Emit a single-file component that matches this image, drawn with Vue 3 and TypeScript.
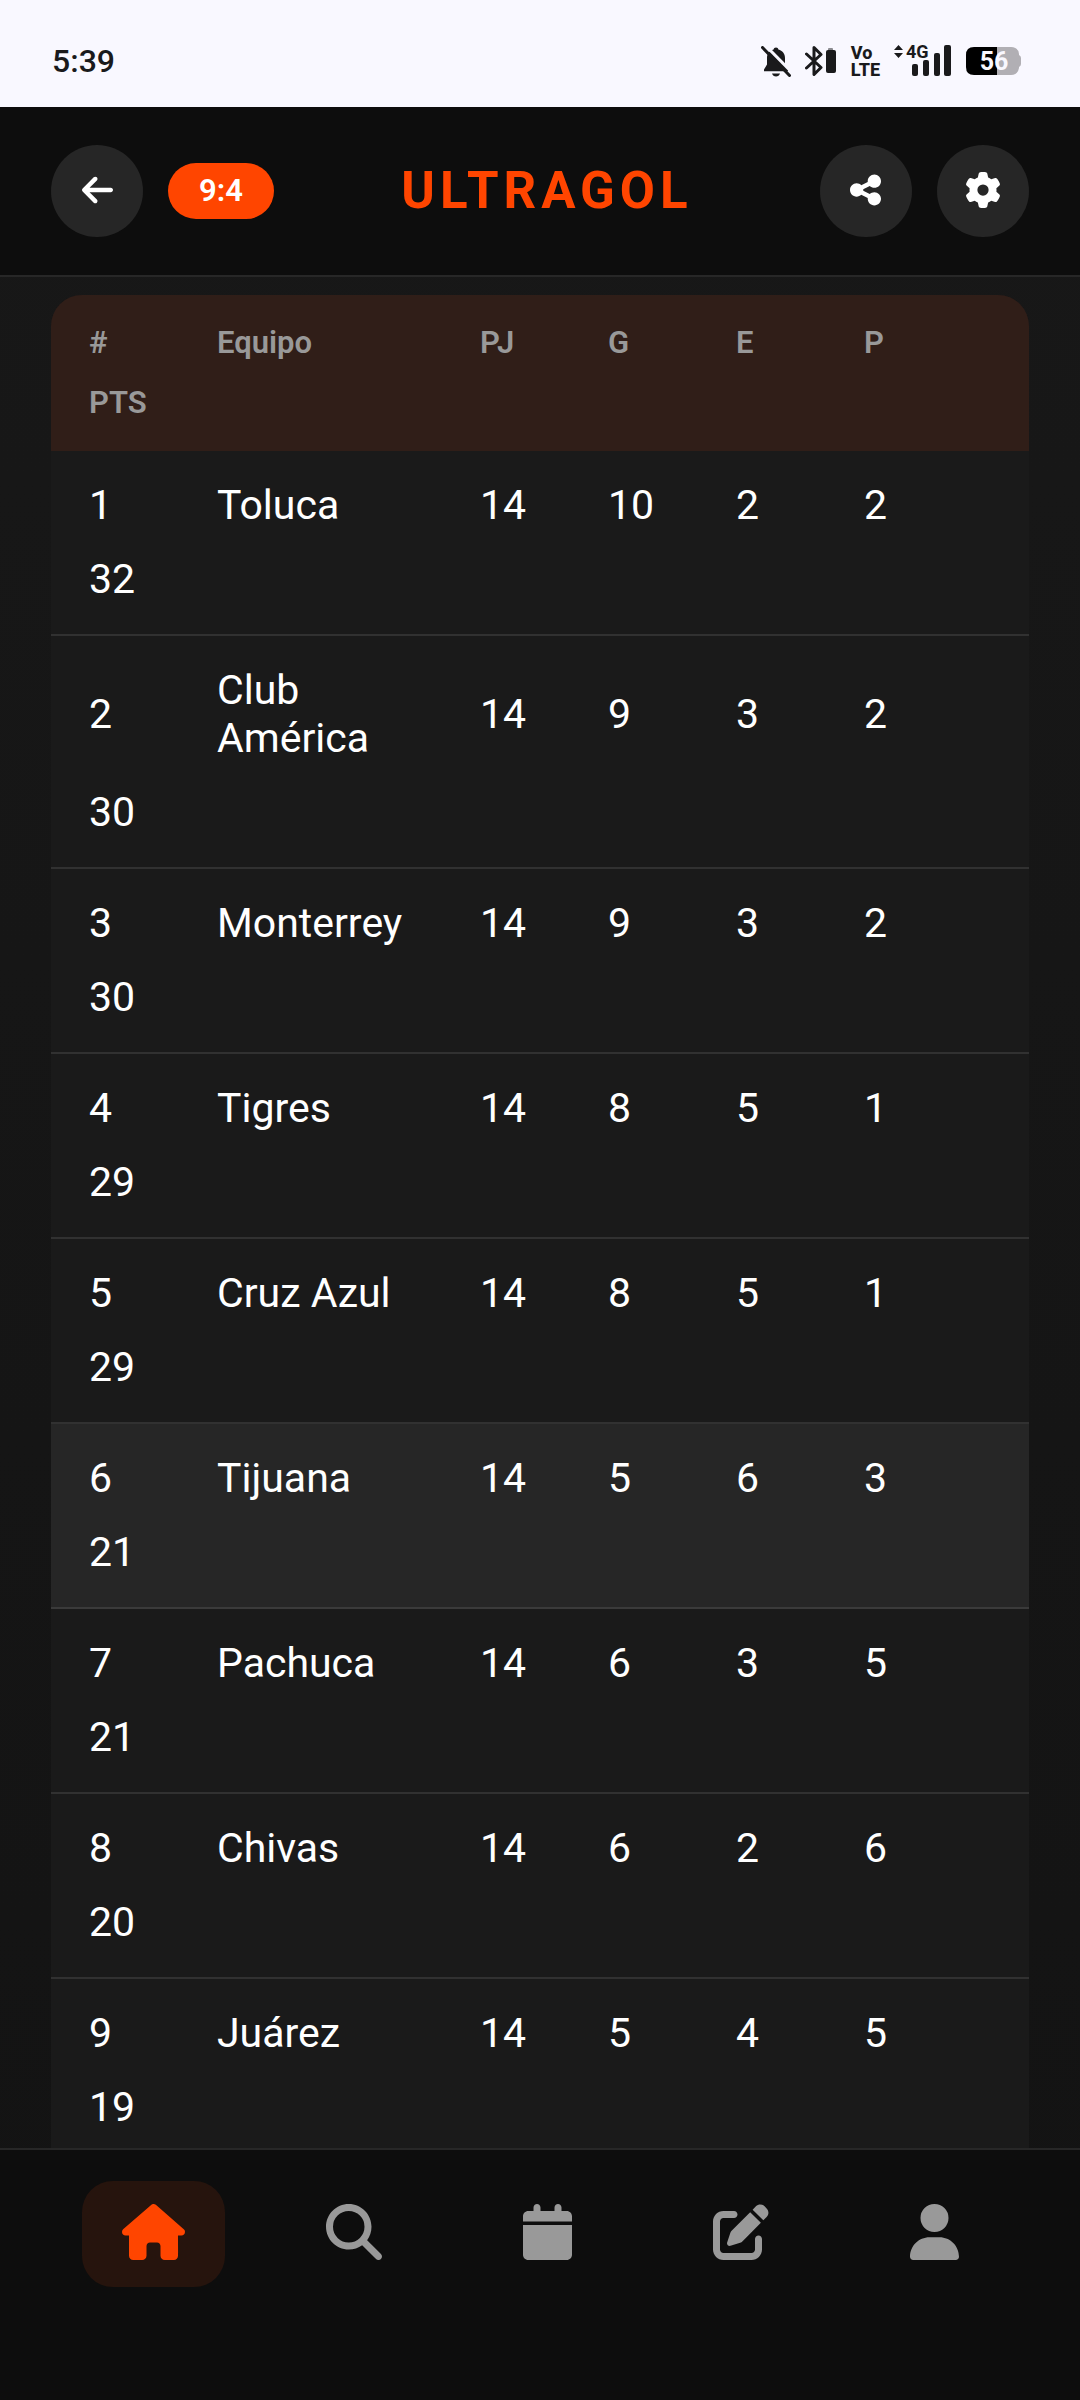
<script setup lang="ts">
import { ref } from 'vue'

interface TeamRow {
  pos: number
  team: string
  played: number
  won: number
  drawn: number
  lost: number
  points: number
}

interface NavItem {
  id: string
  label: string
  box: number
  path: string
}

const columns: string[] = ['#', 'Equipo', 'PJ', 'G', 'E', 'P', 'PTS']

const rows: TeamRow[] = [
  { pos: 1, team: 'Toluca', played: 14, won: 10, drawn: 2, lost: 2, points: 32 },
  { pos: 2, team: 'Club América', played: 14, won: 9, drawn: 3, lost: 2, points: 30 },
  { pos: 3, team: 'Monterrey', played: 14, won: 9, drawn: 3, lost: 2, points: 30 },
  { pos: 4, team: 'Tigres', played: 14, won: 8, drawn: 5, lost: 1, points: 29 },
  { pos: 5, team: 'Cruz Azul', played: 14, won: 8, drawn: 5, lost: 1, points: 29 },
  { pos: 6, team: 'Tijuana', played: 14, won: 5, drawn: 6, lost: 3, points: 21 },
  { pos: 7, team: 'Pachuca', played: 14, won: 6, drawn: 3, lost: 5, points: 21 },
  { pos: 8, team: 'Chivas', played: 14, won: 6, drawn: 2, lost: 6, points: 20 },
  { pos: 9, team: 'Juárez', played: 14, won: 5, drawn: 4, lost: 5, points: 19 },
]

const selected = ref<number>(6)
const activeTab = ref<string>('home')

const navItems: NavItem[] = [
  {
    id: 'home',
    label: 'Inicio',
    box: 576,
    path: 'M575.8 255.5c0 18-15 32.1-32 32.1l-32 0 .7 160.2c0 2.7-.2 5.4-.5 8.1l0 16.2c0 22.1-17.9 40-40 40l-16 0c-1.1 0-2.2 0-3.3-.1c-1.4 .1-2.8 .1-4.2 .1L416 512l-24 0c-22.1 0-40-17.9-40-40l0-24 0-64c0-17.7-14.3-32-32-32l-64 0c-17.7 0-32 14.3-32 32l0 64 0 24c0 22.1-17.9 40-40 40l-24 0-31.9 0c-1.5 0-3-.1-4.5-.2c-1.2 .1-2.4 .2-3.6 .2l-16 0c-22.1 0-40-17.9-40-40l0-112c0-.9 0-1.9 .1-2.8l0-69.7-32 0c-18 0-32-14-32-32.1c0-9 3-17 10-24L266.4 8c7-7 15-8 22-8s15 2 21 7L564.8 231.5c8 7 12 15 11 24z',
  },
  {
    id: 'search',
    label: 'Buscar',
    box: 512,
    path: 'M416 208c0 45.9-14.9 88.3-40 122.7L502.6 457.4c12.5 12.5 12.5 32.8 0 45.3s-32.8 12.5-45.3 0L330.7 376c-34.4 25.2-76.8 40-122.7 40C93.1 416 0 322.9 0 208S93.1 0 208 0S416 93.1 416 208zM208 352a144 144 0 1 0 0-288 144 144 0 1 0 0 288z',
  },
  {
    id: 'calendar',
    label: 'Calendario',
    box: 448,
    path: 'M96 32l0 32L48 64C21.5 64 0 85.5 0 112l0 48 448 0 0-48c0-26.5-21.5-48-48-48l-48 0 0-32c0-17.7-14.3-32-32-32s-32 14.3-32 32l0 32L160 64l0-32c0-17.7-14.3-32-32-32S96 14.3 96 32zM448 192L0 192 0 464c0 26.5 21.5 48 48 48l352 0c26.5 0 48-21.5 48-48l0-272z',
  },
  {
    id: 'edit',
    label: 'Editar',
    box: 512,
    path: 'M471.6 21.7c-21.9-21.9-57.3-21.9-79.2 0L362.3 51.7l97.9 97.9 30.1-30.1c21.9-21.9 21.9-57.3 0-79.2L471.6 21.7zm-299.2 220c-6.1 6.1-10.8 13.6-13.5 21.9l-29.6 88.8c-2.9 8.6-.6 18.1 5.8 24.6s15.9 8.7 24.6 5.8l88.8-29.6c8.2-2.7 15.7-7.4 21.9-13.5L437.7 172.3 339.7 74.3 172.4 241.7zM96 64C43 64 0 107 0 160L0 416c0 53 43 96 96 96l256 0c53 0 96-43 96-96l0-96c0-17.7-14.3-32-32-32s-32 14.3-32 32l0 96c0 17.7-14.3 32-32 32L96 448c-17.7 0-32-14.3-32-32l0-256c0-17.7 14.3-32 32-32l96 0c17.7 0 32-14.3 32-32s-14.3-32-32-32L96 64z',
  },
  {
    id: 'profile',
    label: 'Perfil',
    box: 448,
    path: 'M224 256A128 128 0 1 0 224 0a128 128 0 1 0 0 256zm-45.7 48C79.8 304 0 383.8 0 482.3C0 498.7 13.3 512 29.7 512l388.6 0c16.4 0 29.7-13.3 29.7-29.7C448 383.8 368.2 304 269.7 304l-91.4 0z',
  },
]
</script>

<template>
  <div class="app">
    <div class="status">
      <span class="clock">5:39</span>
      <div class="status-icons">
        <svg class="bell" width="30" height="31" viewBox="0 0 30 31" aria-hidden="true">
          <path d="M15 1.500c1.400 0 2.200.9 2.400 2.100 4 1 6.600 4.400 6.600 8.400v6.500l3 5v1.700H3v-1.700l3-5V12c0-4 2.600-7.400 6.600-8.400.2-1.200 1-2.100 2.400-2.100z" fill="#1a1a1c" />
          <path d="M11 27.500h8c-.6 1.900-2.100 3-4 3s-3.400-1.100-4-3z" fill="#1a1a1c" />
          <path d="M3.500-1.500L31 26.500" stroke="#f9f8ff" stroke-width="3" />
          <path d="M1.500 1.500L28.500 29.500" stroke="#1a1a1c" stroke-width="3" stroke-linecap="round" />
        </svg>
        <svg width="32" height="32" viewBox="0 0 32 32" aria-hidden="true">
          <path d="M1.500 9L16 22.500 9 29.500V2.500L16 9.500 1.500 23" fill="none" stroke="#1a1a1c" stroke-width="3" stroke-linejoin="round" stroke-linecap="round" />
          <rect x="23" y="3" width="5" height="3" rx="1" fill="#8b8b90" />
          <rect x="21" y="5" width="10" height="23" rx="2" fill="#1a1a1c" />
        </svg>
        <span class="volte"><span>Vo</span><span>LTE</span></span>
        <svg class="signal" width="58" height="40" viewBox="0 -4 58 40" aria-hidden="true">
          <path d="M4.500 0L9 5H0zM4.500 13L9 8H0z" fill="#1a1a1c" />
          <text x="12" y="13" font-size="18" font-weight="700" fill="#1a1a1c">4G</text>
          <g fill="#1a1a1c">
            <rect x="18" y="19" width="6" height="12" rx="2" />
            <rect x="29" y="15" width="6" height="16" rx="2" />
            <rect x="40" y="8" width="6" height="23" rx="2" />
            <rect x="50" y="0" width="7" height="31" rx="2" />
          </g>
        </svg>
        <svg class="battery" width="56" height="30" viewBox="0 0 56 30" aria-hidden="true">
          <path d="M31 1h14q7 0 8 7v1q2 1 2 3v6q0 2-2 3v1q-1 7-8 7H31z" fill="#b1afb4" />
          <path d="M31 1H8Q0 1 0 9v12q0 8 8 8h23z" fill="#000" />
          <text x="28" y="24" text-anchor="middle" font-size="25" font-weight="700" fill="#f9f8ff">56</text>
        </svg>
      </div>
    </div>

    <header class="topbar">
      <div class="group">
        <button class="round" type="button" aria-label="Volver">
          <svg width="31" height="36" viewBox="0 0 448 512" fill="currentColor" aria-hidden="true">
            <path d="M9.4 233.4c-12.5 12.5-12.5 32.8 0 45.3l160 160c12.5 12.5 32.8 12.5 45.3 0s12.5-32.8 0-45.3L109.2 288 416 288c17.7 0 32-14.3 32-32s-14.3-32-32-32l-306.7 0L214.6 118.6c12.5-12.5 12.5-32.8 0-45.3s-32.8-12.5-45.3 0l-160 160z" />
          </svg>
        </button>
        <span class="pill">9:4</span>
      </div>
      <h1 class="brand">ULTRAGOL</h1>
      <div class="group">
        <button class="round" type="button" aria-label="Compartir">
          <svg width="31" height="36" viewBox="0 0 448 512" fill="currentColor" aria-hidden="true">
            <path d="M352 224c53 0 96-43 96-96s-43-96-96-96s-96 43-96 96c0 4 .2 8 .7 11.9l-94.1 47C145.4 170.2 121.9 160 96 160c-53 0-96 43-96 96s43 96 96 96c25.9 0 49.4-10.2 66.6-26.9l94.1 47c-.5 3.9-.7 7.8-.7 11.9c0 53 43 96 96 96s96-43 96-96s-43-96-96-96c-25.9 0-49.4 10.2-66.6 26.9l-94.1-47c.5-3.9 .7-7.8 .7-11.9s-.2-8-.7-11.9l94.1-47C302.6 213.8 326.1 224 352 224z" />
          </svg>
        </button>
        <button class="round" type="button" aria-label="Ajustes">
          <svg width="36" height="36" viewBox="0 0 512 512" fill="currentColor" aria-hidden="true">
            <path d="M495.9 166.6c3.2 8.7 .5 18.4-6.4 24.6l-43.3 39.4c1.1 8.3 1.7 16.8 1.7 25.4s-.6 17.1-1.7 25.4l43.3 39.4c6.9 6.2 9.6 15.9 6.4 24.6c-4.4 11.9-9.7 23.3-15.8 34.3l-4.7 8.1c-6.6 11-14 21.4-22.1 31.2c-5.9 7.2-15.7 9.6-24.5 6.8l-55.7-17.7c-13.4 10.3-28.2 18.9-44 25.4l-12.5 57.1c-2 9.1-9 16.3-18.2 17.8c-13.8 2.3-28 3.5-42.5 3.5s-28.7-1.2-42.5-3.5c-9.2-1.5-16.2-8.7-18.2-17.8l-12.5-57.1c-15.8-6.5-30.6-15.1-44-25.4L83.1 425.9c-8.8 2.8-18.6 .3-24.5-6.8c-8.1-9.8-15.5-20.2-22.1-31.2l-4.7-8.1c-6.1-11-11.4-22.4-15.8-34.3c-3.2-8.7-.5-18.4 6.4-24.6l43.3-39.4C64.6 273.1 64 264.6 64 256s.6-17.1 1.7-25.4L22.4 191.2c-6.9-6.2-9.6-15.9-6.4-24.6c4.4-11.9 9.7-23.3 15.8-34.3l4.7-8.1c6.6-11 14-21.4 22.1-31.2c5.9-7.2 15.7-9.6 24.5-6.8l55.7 17.7c13.4-10.3 28.2-18.9 44-25.4l12.5-57.1c2-9.1 9-16.3 18.2-17.8C227.3 1.2 241.5 0 256 0s28.7 1.2 42.5 3.5c9.2 1.5 16.2 8.7 18.2 17.8l12.5 57.1c15.8 6.5 30.6 15.1 44 25.4l55.7-17.7c8.8-2.8 18.6-.3 24.5 6.8c8.1 9.8 15.5 20.2 22.1 31.2l4.7 8.1c6.1 11 11.4 22.4 15.8 34.3zM256 336a80 80 0 1 0 0-160 80 80 0 1 0 0 160z" />
          </svg>
        </button>
      </div>
    </header>

    <main class="content">
      <table class="standings">
        <thead>
          <tr>
            <th v-for="c in columns" :key="c" scope="col">{{ c }}</th>
          </tr>
        </thead>
        <tbody>
          <tr v-for="r in rows" :key="r.pos" :class="{ selected: r.pos === selected }" @click="selected = r.pos">
            <td>{{ r.pos }}</td>
            <td>{{ r.team }}</td>
            <td>{{ r.played }}</td>
            <td>{{ r.won }}</td>
            <td>{{ r.drawn }}</td>
            <td>{{ r.lost }}</td>
            <td>{{ r.points }}</td>
          </tr>
        </tbody>
      </table>
    </main>

    <nav class="tabs">
      <button
        v-for="n in navItems"
        :key="n.id"
        type="button"
        class="tab"
        :class="{ active: n.id === activeTab }"
        :aria-label="n.label"
        @click="activeTab = n.id"
      >
        <svg height="56" :viewBox="`0 0 ${n.box} 512`" fill="currentColor" aria-hidden="true">
          <path :d="n.path" />
        </svg>
      </button>
    </nav>
  </div>
</template>

<style>
body {
  background: #0d0d0d;
}
</style>

<style scoped>
.app {
  display: flex;
  flex-direction: column;
  height: 100vh;
  background: linear-gradient(180deg, #181818 0%, #131313 100%);
  color: #fff;
  font-family: Roboto, 'Noto Sans', sans-serif;
}

.status {
  display: flex;
  align-items: center;
  justify-content: space-between;
  box-sizing: border-box;
  height: 107px;
  padding: 15px 58px 0 52px;
  background: #f9f8ff;
  color: #1a1a1c;
}

.clock {
  font-size: 32px;
  line-height: 36px;
  font-weight: 500;
}

.status-icons {
  display: flex;
  align-items: center;
  gap: 14px;
}

.status-icons svg {
  display: block;
}

.volte {
  display: flex;
  flex-direction: column;
  font-size: 18px;
  line-height: 17px;
  font-weight: 800;
}

.topbar {
  display: flex;
  align-items: center;
  justify-content: space-between;
  padding: 38px 51px;
  background: #0d0d0d;
  border-bottom: 2px solid #272727;
}

.group {
  display: flex;
  align-items: center;
  gap: 25px;
}

.round {
  display: flex;
  align-items: center;
  justify-content: center;
  width: 92px;
  height: 92px;
  padding: 0 0 2px;
  border: 0;
  border-radius: 50%;
  background: #262626;
  color: #fff;
}

.pill {
  padding: 10px 31px;
  border-radius: 28px;
  background: #ff4500;
  font-size: 31px;
  line-height: 36px;
  font-weight: 600;
}

.brand {
  margin: 0;
  color: #ff4500;
  font-size: 51px;
  line-height: 60px;
  font-weight: 700;
  letter-spacing: 5px;
}

.content {
  flex: 1;
  min-height: 0;
  padding: 18px 51px 0;
  overflow-y: auto;
  scrollbar-width: none;
}

.standings {
  display: block;
  overflow: hidden;
  border-radius: 31px 31px 0 0;
  background: #1a1a1a;
}

thead,
tbody {
  display: block;
}

tr {
  display: grid;
  grid-template-columns: 102px 1fr repeat(4, 102px);
  align-items: center;
  column-gap: 26px;
  row-gap: 26px;
  padding: 30px 63px 31px 38px;
}

th,
td {
  padding: 0;
  text-align: left;
}

thead tr {
  row-gap: 25px;
  background: #301e18;
}

th {
  color: #999;
  font-size: 31px;
  line-height: 35px;
  font-weight: 600;
}

tbody tr {
  border-bottom: 2px solid #313131;
}

tbody tr.selected {
  background: #262626;
  border-bottom-color: #3a3a3a;
}

td {
  font-size: 41px;
  line-height: 48px;
  font-weight: 400;
}

.tabs {
  display: flex;
  align-items: flex-start;
  justify-content: space-around;
  padding: 31px 51px 113px;
  background: #0d0d0d;
  border-top: 2px solid #272727;
}

.tab {
  padding: 23px 40px 27px;
  border: 0;
  border-radius: 31px;
  background: transparent;
  color: #999;
}

.tab.active {
  background: #26140d;
  color: #ff4500;
}

.tab svg {
  display: block;
}
</style>
